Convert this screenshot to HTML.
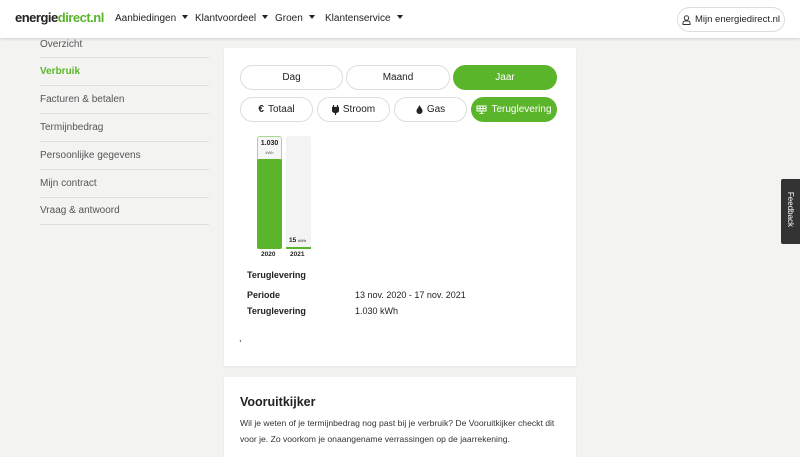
<!DOCTYPE html>
<html><head><meta charset="utf-8"><style>
*{box-sizing:border-box;margin:0;padding:0}
body{width:800px;height:450px;overflow:hidden;background:#f3f3f2;font-family:"Liberation Sans",sans-serif;color:#222;position:relative}
.a{position:absolute;white-space:nowrap}
.hdr{left:0;top:0;width:800px;height:38px;background:#fff;box-shadow:0 1px 3px rgba(0,0,0,.15);z-index:2}
.nav{font-size:10px;color:#222;top:13px}
.nav:after{content:"";display:inline-block;margin-left:6px;border-left:3px solid transparent;border-right:3px solid transparent;border-top:4px solid #222;vertical-align:2px}
.side{left:40px;width:169px;font-size:10px;color:#555;height:28px;line-height:28px;border-bottom:1px solid #dedede}
.card{background:#fff;box-shadow:0 1px 2px rgba(0,0,0,.06)}
.pill{position:absolute;height:25px;border:1px solid #ddd;border-radius:13px;background:#fff;font-size:10px;display:flex;align-items:center;justify-content:center;gap:4px;color:#222;white-space:nowrap}
.on{background:#5bb52a;border-color:#5bb52a;color:#fff}
.b{font-weight:bold;font-size:9px}
.t{font-size:9px}
</style></head><body>
<div class="a hdr">
 <div class="a" style="left:15px;top:10px;font-size:13px;font-weight:bold;letter-spacing:-0.5px"><span style="color:#222">energie</span><span style="color:#5bb52a">direct.nl</span></div>
 <div class="a nav" style="left:115px">Aanbiedingen</div>
 <div class="a nav" style="left:195px">Klantvoordeel</div>
 <div class="a nav" style="left:275px">Groen</div>
 <div class="a nav" style="left:325px">Klantenservice</div>
 <div class="a" style="left:677px;top:7px;width:108px;height:25px;border:1px solid #ddd;border-radius:13px;font-size:9.5px;display:flex;align-items:center;justify-content:center;gap:4px">
  <svg width="9" height="10" viewBox="0 0 9 10"><circle cx="4.5" cy="3" r="2.2" fill="none" stroke="#333" stroke-width="1"/><path d="M1 9.5V8a2 2 0 0 1 2-2h3a2 2 0 0 1 2 2v1.5z" fill="none" stroke="#333" stroke-width="1"/></svg>Mijn energiedirect.nl</div>
</div>
<div class="a side" style="top:30px;line-height:30px">Overzicht</div>
<div class="a side" style="top:58px;color:#5bb52a;font-weight:bold">Verbruik</div>
<div class="a side" style="top:86px">Facturen &amp; betalen</div>
<div class="a side" style="top:114px">Termijnbedrag</div>
<div class="a side" style="top:142px">Persoonlijke gegevens</div>
<div class="a side" style="top:170px">Mijn contract</div>
<div class="a side" style="top:197px">Vraag &amp; antwoord</div>

<div class="a card" style="left:224px;top:48px;width:352px;height:318px">
 <div class="pill" style="left:16px;top:17px;width:103px">Dag</div>
 <div class="pill" style="left:122px;top:17px;width:104px">Maand</div>
 <div class="pill on" style="left:229px;top:17px;width:104px">Jaar</div>
 <div class="pill" style="left:16px;top:49px;width:73px"><b>€</b> Totaal</div>
 <div class="pill" style="left:93px;top:49px;width:73px"><svg width="7" height="10" viewBox="0 0 7 10"><path d="M1.5 0v2.5M5.5 0v2.5M0 2.5h7v2a3.5 3 0 0 1-7 0zM3.5 7v3" fill="#222" stroke="#222" stroke-width="1.2"/></svg>Stroom</div>
 <div class="pill" style="left:170px;top:49px;width:73px"><svg width="7" height="9" viewBox="0 0 7 9"><path d="M3.5 0C4 2 6.5 3.5 6.5 6A3 3 0 0 1 .5 6C.5 4 2 3.5 3.5 0z" fill="#222"/></svg>Gas</div>
 <div class="pill on" style="left:247px;top:49px;width:86px"><svg width="11" height="9" viewBox="0 0 11 9"><path d="M1 1h9v5H1zM1 3.5h9M4 1v5M7 1v5M5.5 6v2.5M3.5 8.5h4" fill="none" stroke="#fff" stroke-width="1"/></svg>Teruglevering</div>
 <div class="a" style="left:33px;top:88px;width:25px;height:113px;border:1px solid #a9d78f;border-radius:3px;background:#f6f6f6"></div>
 <div class="a" style="left:33px;top:111px;width:25px;height:90px;background:#5bb52a;border-radius:2px"></div>
 <div class="a b" style="left:33px;top:92px;width:25px;text-align:center;font-size:7px">1.030</div>
 <div class="a" style="left:33px;top:102px;width:25px;text-align:center;font-size:4px;color:#555">kWh</div>
 <div class="a" style="left:62px;top:88px;width:25px;height:113px;background:#f3f3f3;border-radius:2px"></div>
 <div class="a" style="left:62px;top:199px;width:25px;height:2px;background:#5bb52a"></div>
 <div class="a b" style="left:65px;top:189px;font-size:6.5px">15 <span style="font-size:4px;font-weight:normal">kWh</span></div>
 <div class="a b" style="left:37px;top:203px;font-size:6.5px">2020</div>
 <div class="a b" style="left:66px;top:203px;font-size:6.5px">2021</div>
 <div class="a b" style="left:23px;top:222px">Teruglevering</div>
 <div class="a b" style="left:23px;top:242px">Periode</div>
 <div class="a t" style="left:131px;top:242px">13 nov. 2020 - 17 nov. 2021</div>
 <div class="a b" style="left:23px;top:258px">Teruglevering</div>
 <div class="a t" style="left:131px;top:258px">1.030 kWh</div>
 <div class="a t" style="left:15px;top:285px">,</div>
</div>

<div class="a card" style="left:224px;top:377px;width:352px;height:80px">
 <div class="a" style="left:16px;top:18px;font-size:12.5px;font-weight:bold">Vooruitkijker</div>
 <div class="a" style="left:16px;top:39px;width:320px;font-size:8.6px;line-height:15.5px;color:#333;white-space:normal">Wil je weten of je termijnbedrag nog past bij je verbruik? De Vooruitkijker checkt dit voor je. Zo voorkom je onaangename verrassingen op de jaarrekening.</div>
</div>

<div class="a" style="left:781px;top:179px;width:19px;height:65px;background:#333;border-radius:2px 0 0 2px">
 <div class="a" style="left:-18px;top:26px;width:55px;text-align:center;font-size:8px;color:#fff;transform:rotate(90deg)">Feedback</div>
</div>
</body></html>
